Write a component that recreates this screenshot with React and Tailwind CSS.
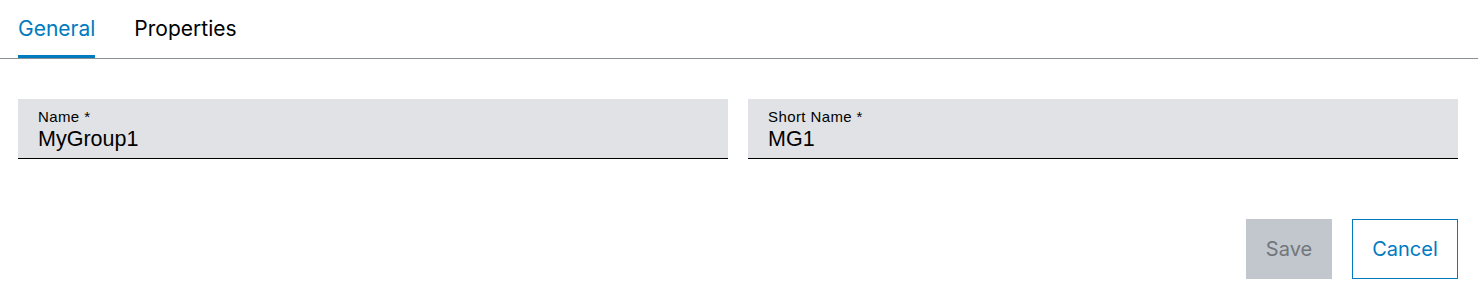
import React, { useState } from 'react';

const tabs = ['General', 'Properties'];

const Field = ({ label, value }) => (
  <div className="flex-1 h-[60px] bg-[#e0e2e5] border-b border-[#000000] pl-5 pt-[8px] flex flex-col">
    <span className="text-[15px] leading-[19px] tracking-[0.4px] text-black" style={{ fontFamily: '"Liberation Sans", Arial, sans-serif' }}>
      {label}
    </span>
    <span className="text-[21.5px] leading-[27px] text-black" style={{ fontFamily: '"Liberation Sans", Arial, sans-serif' }}>
      {value}
    </span>
  </div>
);

export default function App() {
  const [active, setActive] = useState('General');

  return (
    <div className="w-[1478px] h-[292px] bg-white font-['Inter',sans-serif]">
      {/* Tab bar */}
      <div className="h-[59px] border-b border-[#8a9097] flex items-end pl-[18px] gap-[39px]">
        {tabs.map((t) => (
          <button
            key={t}
            onClick={() => setActive(t)}
            className={`h-full flex flex-col justify-end text-[21px] leading-none cursor-pointer ${
              active === t ? 'text-[#007bc0]' : 'text-black'
            }`}
          >
            <span className="pb-[16px]">{t}</span>
            <span className={`h-[3px] w-full ${active === t ? 'bg-[#007bc0]' : 'bg-transparent'}`}></span>
          </button>
        ))}
      </div>

      {/* Form fields */}
      <div className="flex gap-5 pl-[18px] pr-5 pt-10">
        <Field label="Name *" value="MyGroup1" />
        <Field label="Short Name *" value="MG1" />
      </div>

      {/* Actions */}
      <div className="flex justify-end gap-5 pr-5 pt-[60px]">
        <button className="w-[86px] h-[60px] bg-[#c1c7cc] text-[#71767c] text-[20px] cursor-not-allowed">
          Save
        </button>
        <button className="w-[106px] h-[60px] border border-[#007bc0] text-[#007bc0] text-[20px] bg-white">
          Cancel
        </button>
      </div>
    </div>
  );
}
